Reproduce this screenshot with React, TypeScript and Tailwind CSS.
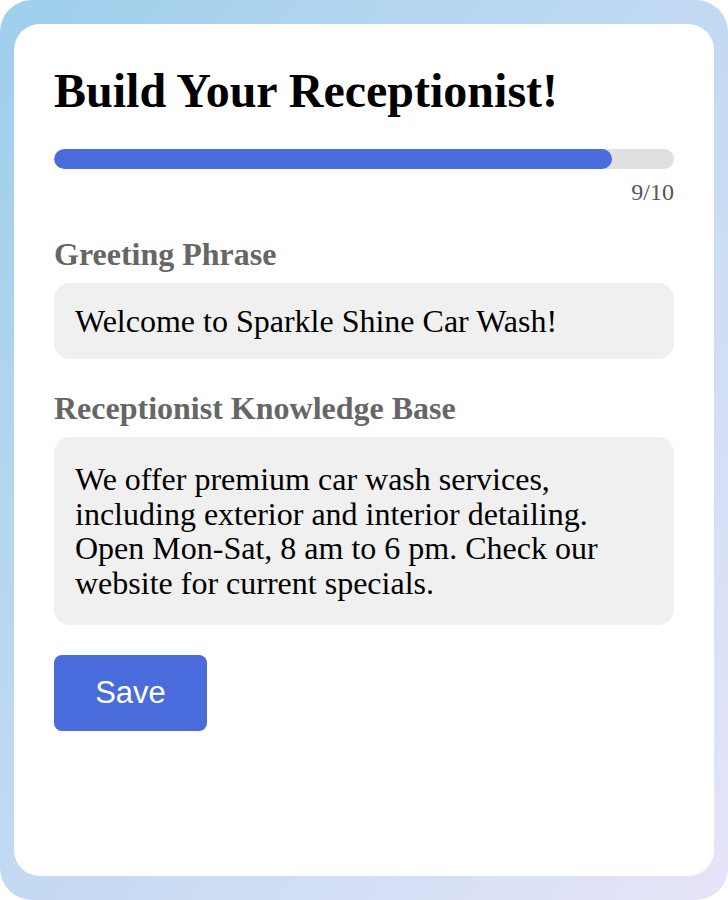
import { useState } from 'react';

const STEP = 9;
const TOTAL = 10;

export default function App() {
  const [greeting, setGreeting] = useState('Welcome to Sparkle Shine Car Wash!');
  const [knowledge, setKnowledge] = useState(
    'We offer premium car wash services, including exterior and interior detailing. Open Mon-Sat, 8 am to 6 pm. Check our website for current specials.'
  );

  return (
    <div className="bg-white">
      <div className="h-[900px] w-[728px] rounded-[32px] bg-gradient-to-br from-[#9ecfec] to-[#e6e4f8] px-[14px] py-6">
        <div className="h-full rounded-[26px] bg-white px-10 pt-10 font-['Liberation_Serif','Times_New_Roman',serif]">
          <h1 className="text-[48px] leading-[54px] font-bold text-black">Build Your Receptionist!</h1>

          <div className="mt-[31px] h-5 w-full overflow-hidden rounded-full bg-[#e0e0e0]">
            <div
              className="h-full rounded-full bg-[#4a6bdb]"
              style={{ width: `${(STEP / TOTAL) * 100}%` }}
            />
          </div>
          <div className="mt-[10px] text-right text-[24px] leading-[27px] text-[#555]">
            {STEP}/{TOTAL}
          </div>

          <label className="mt-[30px] block text-[32px] leading-[36px] font-bold text-[#666]">
            Greeting Phrase
          </label>
          <input
            value={greeting}
            onChange={(e) => setGreeting(e.target.value)}
            className="mt-[11px] block h-[76px] w-full rounded-2xl bg-[#f0f0f0] px-[21px] text-[32px] text-black outline-none"
          />

          <label className="mt-[31px] block text-[32px] leading-[36px] font-bold text-[#666]">
            Receptionist Knowledge Base
          </label>
          <textarea
            value={knowledge}
            onChange={(e) => setKnowledge(e.target.value)}
            className="mt-[11px] block h-[188px] w-full resize-none rounded-2xl bg-[#f0f0f0] px-[21px] pt-[25px] text-[32px] leading-[34.7px] text-black outline-none"
          />

          <button className="mt-[30px] flex h-[76px] w-[153px] items-center justify-center rounded-lg bg-[#4a6bdb] font-['Liberation_Sans',Arial,sans-serif] text-[31px] leading-[36px] text-white">
            Save
          </button>
        </div>
      </div>
    </div>
  );
}
